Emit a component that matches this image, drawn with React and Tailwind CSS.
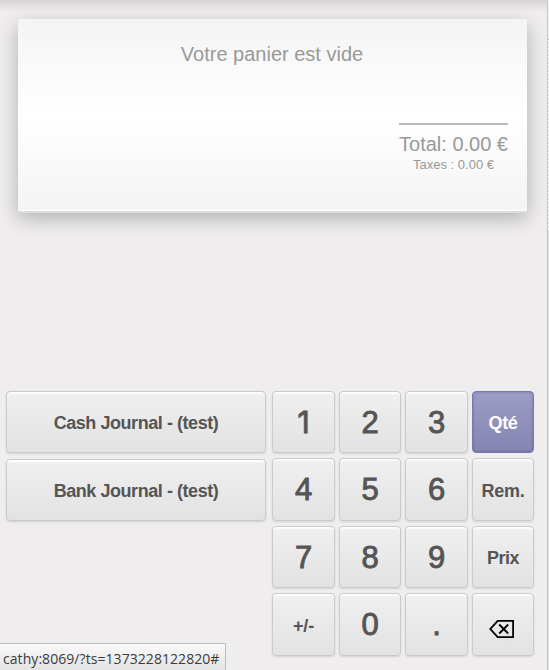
const keyBase =
  "flex items-center justify-center rounded-[4px] border border-[#cacaca] bg-linear-to-b from-[#f0f0f0] to-[#e2e2e2] text-[#555555] shadow-[0_1px_2px_rgba(0,0,0,0.12),inset_0_2px_1px_rgba(255,255,255,0.85)]";

function Digit({ children, className = "text-[31px]" }) {
  return (
    <button className={`${keyBase} ${className} leading-none [-webkit-text-stroke:0.9px_#555555]`}>
      {children}
    </button>
  );
}

function Label({ children, className = "pt-px tracking-[-0.45px]" }) {
  return (
    <button className={`${keyBase} ${className} text-[18px] leading-none font-bold`}>
      {children}
    </button>
  );
}

function Order() {
  return (
    <section className="mx-[18px] mt-[19px] h-[192px] w-[509px] rounded-[2px] bg-[linear-gradient(#f4f4f4,#ffffff_50%,#f4f4f4)] pr-[19px] text-[#999999] shadow-[inset_0_-1px_0_#ffffff,0_2px_0_#dddcdd,0_7px_20px_rgba(0,0,0,0.27)]">
      <p className="pt-[23px] pl-[18px] text-center text-[20px] leading-[24px]">Votre panier est vide</p>
      <div className="mt-[57px] ml-auto w-[109px] border-t-2 border-[#b9b9b9] pt-[7px] text-center whitespace-nowrap">
        <div className="text-[20px] leading-[24px]">Total: 0.00 €</div>
        <div className="pt-px text-[13px] leading-[16px]">Taxes : 0.00 €</div>
      </div>
    </section>
  );
}

export default function App() {
  return (
    <div className="relative flex h-[670px] w-[549px] overflow-hidden bg-[#efedee] font-['Liberation_Sans',Arial,sans-serif]">
      <main className="flex h-full w-[547px] shrink-0 flex-col bg-[linear-gradient(#d5d3d4,#efedee_12px)]">
        <Order />
        <div className="mt-[180px] flex gap-[6px] pl-[6px]">
          <div className="grid h-[130px] w-[260px] grid-rows-[62px_62px] gap-y-[6px]">
            <Label>Cash Journal - (test)</Label>
            <Label>Bank Journal - (test)</Label>
          </div>
          <div className="grid grid-cols-[63px_62px_63px_62px] grid-rows-[62px_63px_62px_63px] gap-x-[4px] gap-y-[5px]">
            <Digit className="font-['Inter',sans-serif] text-[30px] font-normal">1</Digit>
            <Digit>2</Digit>
            <Digit>3</Digit>
            <button className="flex items-center justify-center rounded-[4px] border border-[#7878a9] bg-linear-to-b from-[#9c9cc6] to-[#8585b2] pt-px text-[18px] leading-none font-bold tracking-[-0.4px] text-white shadow-[inset_0_0_3px_rgba(65,65,120,0.4)]">
              Qté
            </button>
            <Digit>4</Digit>
            <Digit>5</Digit>
            <Digit>6</Digit>
            <Label className="pt-[3px] tracking-[-0.2px]">Rem.</Label>
            <Digit>7</Digit>
            <Digit>8</Digit>
            <Digit>9</Digit>
            <Label className="pt-px tracking-[-0.5px]">Prix</Label>
            <Label className="pt-[2px] tracking-[-0.1px]">+/-</Label>
            <Digit>0</Digit>
            <Digit>.</Digit>
            <button className={`${keyBase} pt-[9px] pr-[2px]`} aria-label="Backspace">
              <svg width="26" height="20" viewBox="0 0 26 20" fill="none" stroke="#000" strokeWidth="1.8">
                <path d="M8.7 1.9H24.1V18.1H8.7L1.3 10Z" />
                <path d="M10.2 5.5L19.2 14.5M19.2 5.5L10.2 14.5" />
              </svg>
            </button>
          </div>
        </div>
      </main>
      <aside className="flex w-[2px] shrink-0 flex-col border-l border-[#c8c7c8]">
        <div className="h-[39px] bg-[#f3f2f3]" />
        <div className="h-px bg-[#bbbbbb]" />
        <div className="h-[191px] bg-[repeating-linear-gradient(#ffffff_0_2px,#e7e7e7_2px_4px)]" />
        <div className="flex-1 bg-[#dedddd]" />
      </aside>
      <div className="absolute bottom-0 left-0 flex h-[27px] w-[226px] items-center border-t border-r border-[#bcbcbc] bg-linear-to-b from-[#fafafa] to-[#e3e3e3] pt-[4px] pl-[3px] font-['Open_Sans',sans-serif] text-[14px] leading-none tracking-[0.06px] whitespace-nowrap text-[#3c3c3c]">
        cathy:8069/?ts=1373228122820#
      </div>
    </div>
  );
}
